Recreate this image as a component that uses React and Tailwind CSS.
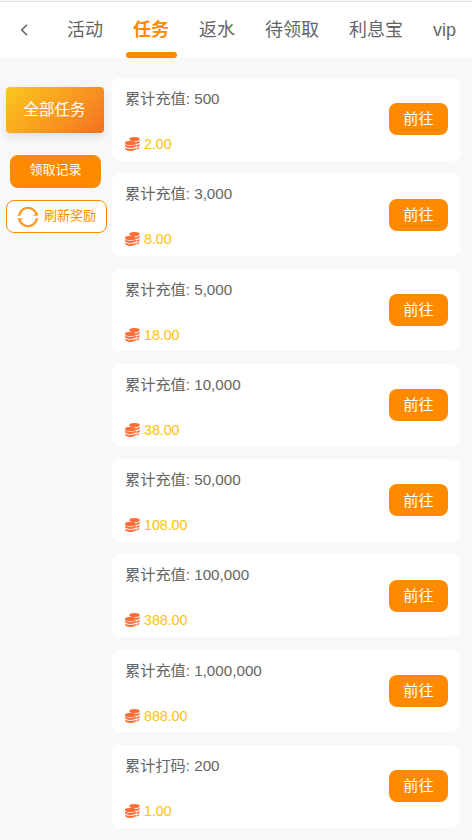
const tabs = ['活动', '任务', '返水', '待领取', '利息宝', 'vip'];

const tasks = [
  ['累计充值', '500', '2.00'],
  ['累计充值', '3,000', '8.00'],
  ['累计充值', '5,000', '18.00'],
  ['累计充值', '10,000', '38.00'],
  ['累计充值', '50,000', '108.00'],
  ['累计充值', '100,000', '388.00'],
  ['累计充值', '1,000,000', '888.00'],
  ['累计打码', '200', '1.00'],
];

function Coins() {
  return (
    <svg className="h-[14px] w-[15px] shrink-0" viewBox="0 0 15 14">
      <g fill="#ff6c37">
        <ellipse cx="9.5" cy="2.1" rx="5.200" ry="2.1" />
        <path d="M11 5.1c1.800-.1 3.200-.6 3.700-1.500v1.500c0 1-1.400 1.800-3.400 2z" />
        <path d="M11.500 8c1.600-.1 2.800-.6 3.200-1.300v1.400c0 1-1.200 1.800-3.200 2z" />
        <path d="M11.500 11c1.400-.2 2.400-.6 2.900-1.200v1c0 .9-1.200 1.500-2.900 1.700z" />
        <ellipse cx="5.500" cy="6" rx="5.500" ry="2.300" />
        <path d="M0 7.300c1 1.200 3 1.700 5.500 1.700s4.500-.5 5.500-1.700v1.400c0 1.300-2.500 2.200-5.500 2.200s-5.500-.9-5.500-2.200z" />
        <path d="M.2 10.400c1 1 2.900 1.400 5.300 1.400s4.300-.4 5.300-1.400v1.400c0 1.300-2.300 2.200-5.300 2.200s-5.300-.9-5.300-2.200z" />
      </g>
    </svg>
  );
}

function Refresh() {
  return (
    <svg className="h-[22px] w-[22px] shrink-0" viewBox="0 0 22 22" fill="none">
      <path d="M2 9.800A9 9 0 0 1 19.700 8.800M20 12.200A9 9 0 0 1 2.300 13.200" stroke="#ff9a26" strokeWidth="2.400" />
      <path d="M15.500 9.800h5.500V6.500zM6.500 12.200H1v3.300z" fill="#ff9a26" />
    </svg>
  );
}

export default function App() {
  return (
    <div className="h-[840px] w-[472px] overflow-hidden bg-[#f8f8f8] font-['Liberation_Sans','Noto_Sans_CJK_SC',sans-serif] text-[#646566]">
      <header className="flex h-[58px] border-t border-[#f7f7f7] bg-white">
        <div className="flex h-full w-full border-t border-[#e5e5e5]">
          <div className="flex w-[52px] shrink-0 items-center pl-[20px]">
            <svg className="h-3 w-2" viewBox="0 0 8 12" fill="none" stroke="#646566" strokeWidth="1.600">
              <path d="M7 .8L1.800 6L7 11.200" />
            </svg>
          </div>
          {tabs.map((tab) => (
            <div key={tab} className="flex shrink-0 flex-col items-center justify-between px-[7.500px]">
              <span className={tab === '任务' ? 'px-[7.500px] pt-[15px] text-[18px] leading-[27px] font-bold text-[#ff8a00]' : 'px-[7.500px] pt-[15px] text-[18px] leading-[27px]'}>
                {tab}
              </span>
              {tab === '任务' && <span className="h-[6px] w-[51px] rounded-[3px] bg-[#ff8a00]" />}
            </div>
          ))}
        </div>
      </header>
      <div className="flex">
        <aside className="flex w-[112px] shrink-0 flex-col items-start pt-[29px] pl-[6px]">
          <div className="flex h-[46px] w-[98px] items-center justify-center rounded-[4px] bg-linear-135 from-[#f9c81b] to-[#f37021] pr-px text-[15.500px] text-white shadow-[0_4px_8px_rgba(0,0,0,0.1)]">
            全部任务
          </div>
          <div className="mt-[22px] ml-[4px] flex h-[33px] w-[91px] items-center justify-center rounded-[8px] bg-[#ff8a00] pb-[3px] text-[13px] text-white">
            领取记录
          </div>
          <div className="mt-[12px] flex h-[33px] w-[101px] items-center rounded-[8px] border border-[#ff8a00] bg-white pl-[10px] text-[13px] text-[#ff8a00]">
            <Refresh />
            <span className="ml-[5px] pb-[2px]">刷新奖励</span>
          </div>
        </aside>
        <main className="flex w-[348px] flex-col gap-[12.800px] pt-[20px]">
          {tasks.map(([label, target, reward]) => (
            <div key={target} className="flex h-[82.500px] shrink-0 items-center justify-between rounded-[8px] bg-white pr-[12px] pl-[13px]">
              <div className="flex h-full flex-col justify-between pt-[10px] pb-[6.500px]">
                <div className="text-[15.200px] leading-[22px] whitespace-pre">{label}: {target}</div>
                <div className="flex items-center gap-[4px] text-[14.200px] leading-[20px] text-[#ffc107]">
                  <Coins />
                  <span>{reward}</span>
                </div>
              </div>
              <button className="h-[32px] w-[59px] rounded-[8px] bg-[#ff8a00] pt-px text-[15.200px] text-white">前往</button>
            </div>
          ))}
        </main>
      </div>
    </div>
  );
}
